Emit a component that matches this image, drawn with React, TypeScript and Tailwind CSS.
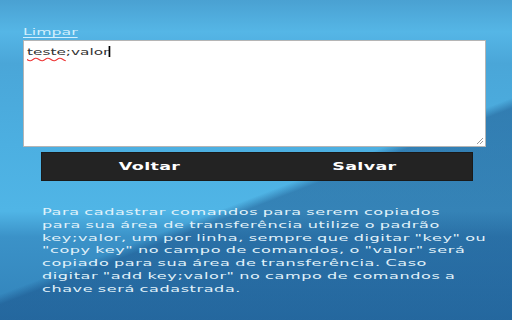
import React from 'react';

const font = { fontFamily: '"DejaVu Sans", "Liberation Sans", sans-serif' };

const lines = [
  'Para cadastrar comandos para serem copiados',
  'para sua área de transferência utilize o padrão',
  'key;valor, um por linha, sempre que digitar "key" ou',
  '"copy key" no campo de comandos, o "valor" será',
  'copiado para sua área de transferência. Caso',
  'digitar "add key;valor" no campo de comandos a',
  'chave será cadastrada.',
];

export default function App() {
  return (
    <div
      style={font}
      className="w-full h-[320px] overflow-hidden pt-[26px] pl-[23px] leading-none bg-[linear-gradient(159deg,transparent_57%,rgba(20,70,125,0.45)_59%),linear-gradient(180deg,#4aa1d2_0%,#55b6e6_10%,#4aa6d8_20%,#4cafe1_45%,#50b5e6_66%,#3b92c8_74%,#3283ba_100%)]"
    >
      <a href="#" className="block h-[12px] text-[9px] leading-[12px] text-[#d2effd]">
        <span className="inline-block origin-left scale-x-[1.75] underline decoration-[0.6px] underline-offset-[2px]">Limpar</span>
      </a>

      <div className="relative mt-[2px] w-[463px] h-[107px] bg-white border border-[#b5b5b5] px-[3px] pt-[3px] leading-[12px]">
        <span className="inline-block origin-left scale-x-[1.7] text-[9px] leading-[12px] text-[#333]">
          <span className="underline decoration-wavy decoration-[#e33] decoration-[0.6px] underline-offset-2">teste</span>;valor
          <span className="inline-block w-[0.7px] h-[11px] bg-black align-[-2px]" />
        </span>
        <svg className="absolute right-px bottom-px" width="9" height="9" viewBox="0 0 9 9">
          <path d="M8 2 L2 8 M8 5 L5 8" stroke="#9a9a9a" strokeWidth="1" />
        </svg>
      </div>

      <div className="ml-[18px] mt-[5px] w-[432px] h-[29px] flex bg-[#232323] border border-[#1a1a1a] text-white">
        <button className="flex-1 flex items-center justify-center">
          <span className="inline-block scale-x-[1.75] text-[10px] font-bold tracking-[0.2px]">Voltar</span>
        </button>
        <button className="flex-1 flex items-center justify-center">
          <span className="inline-block scale-x-[1.75] text-[10px] font-bold tracking-[0.2px]">Salvar</span>
        </button>
      </div>

      <p className="ml-[19px] mt-[25px] text-[9.5px] leading-[12.8px] tracking-[0.35px] [word-spacing:-0.6px] text-[#e1f2fa] whitespace-nowrap">
        {lines.map((l) => (
          <span key={l} className="block origin-left scale-x-[1.69]">
            {l}
          </span>
        ))}
      </p>
    </div>
  );
}
